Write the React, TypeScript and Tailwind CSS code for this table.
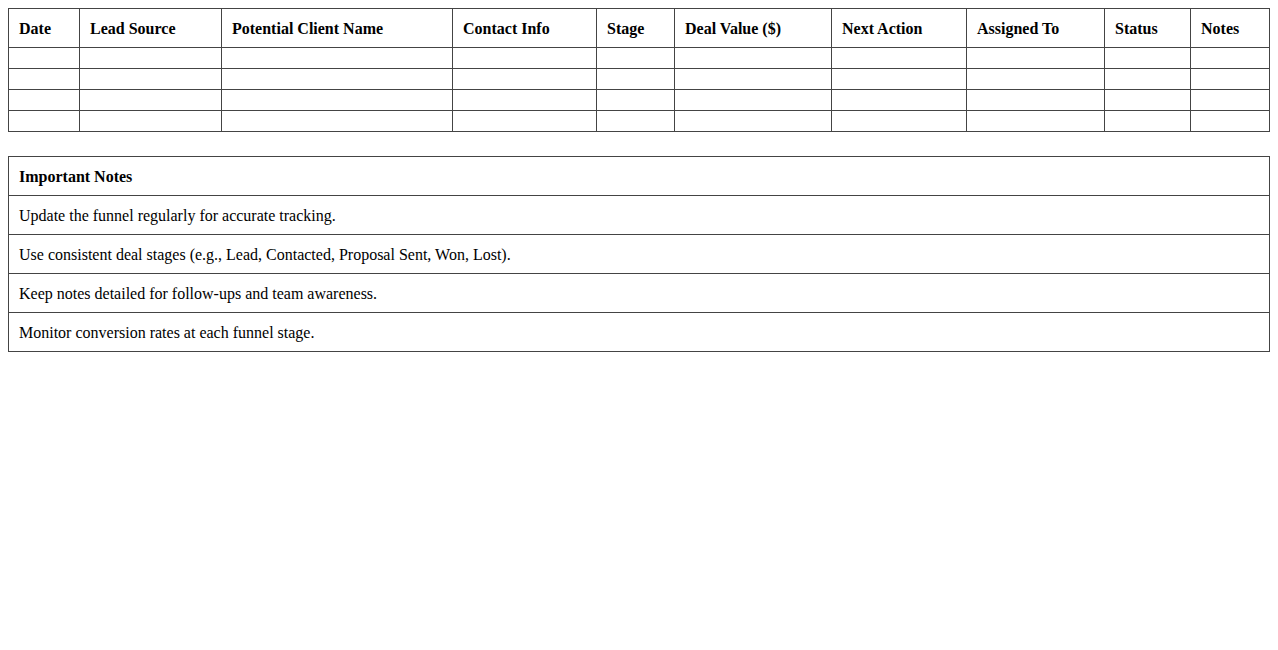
const columns = [
  { label: "Date", w: "w-[71px]" },
  { label: "Lead Source", w: "w-[142px]" },
  { label: "Potential Client Name", w: "w-[231px]" },
  { label: "Contact Info", w: "w-[144px]" },
  { label: "Stage", w: "w-[78px]" },
  { label: "Deal Value ($)", w: "w-[157px]" },
  { label: "Next Action", w: "w-[135px]" },
  { label: "Assigned To", w: "w-[138px]" },
  { label: "Status", w: "w-[86px]" },
  { label: "Notes", w: "w-[79px]" },
];

const notes = [
  "Update the funnel regularly for accurate tracking.",
  "Use consistent deal stages (e.g., Lead, Contacted, Proposal Sent, Won, Lost).",
  "Keep notes detailed for follow-ups and team awareness.",
  "Monitor conversion rates at each funnel stage.",
];

const cell = "border border-[#444] px-[10px] pt-[11px] pb-[9px] text-left align-middle";

export default function App() {
  return (
    <div className="min-h-screen bg-white p-2 text-black text-base leading-[18px] font-['Liberation_Serif','Times_New_Roman',serif]">
      <table className="w-[1261px] table-fixed border-collapse">
        <colgroup>
          {columns.map((c) => (
            <col key={c.label} className={c.w} />
          ))}
        </colgroup>
        <thead>
          <tr>
            {columns.map((c) => (
              <th key={c.label} className={`${cell} font-bold`}>
                {c.label}
              </th>
            ))}
          </tr>
        </thead>
        <tbody>
          {[0, 1, 2, 3].map((r) => (
            <tr key={r}>
              {columns.map((c) => (
                <td key={c.label} className="border border-[#444] h-[21px] p-0"></td>
              ))}
            </tr>
          ))}
        </tbody>
      </table>

      <table className="mt-6 w-[1262px] border-collapse">
        <thead>
          <tr>
            <th className={`${cell} font-bold`}>Important Notes</th>
          </tr>
        </thead>
        <tbody>
          {notes.map((n) => (
            <tr key={n}>
              <td className={cell}>{n}</td>
            </tr>
          ))}
        </tbody>
      </table>
    </div>
  );
}
